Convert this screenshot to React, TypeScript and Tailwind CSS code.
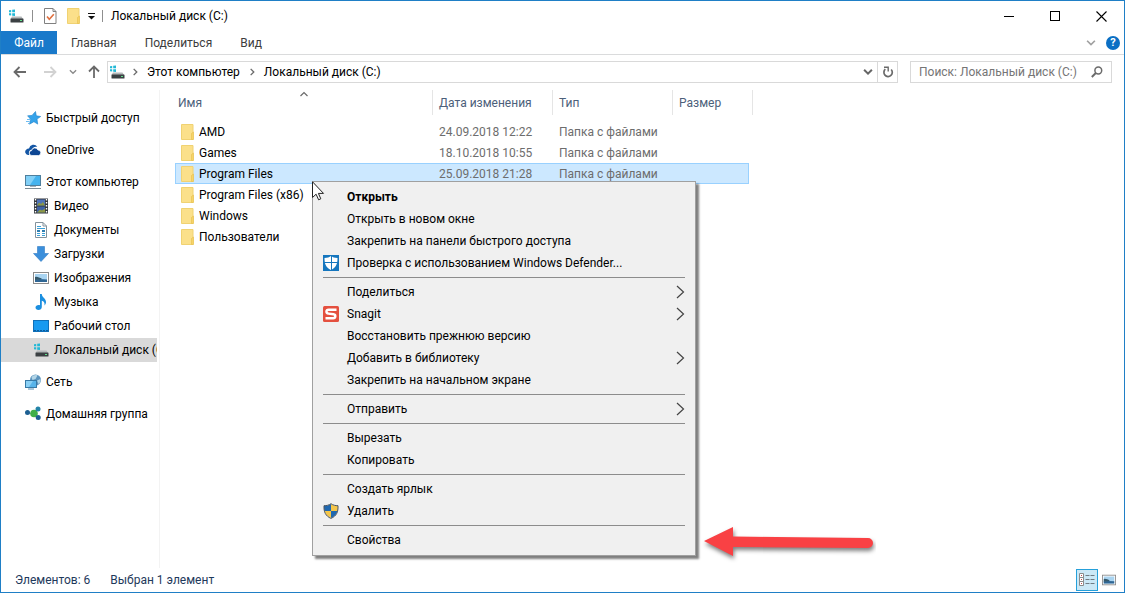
import { useState } from "react";
import type { ReactNode } from "react";
import clsx from "clsx";

/* ---------- Icons ---------- */

function DriveIcon() {
  return (
    <svg width="16" height="16" viewBox="0 0 16 16" aria-hidden="true">
      <path d="M1 2.2 3.200 2v2.300H1zM4.200 1.800l2.800-.3v2.800H4.200zM1 5.200h2.200v2.300L1 7.300zM4.200 5.200H7V8l-2.800-.3z" fill="#22b8d6" />
      <path d="M4 8.500h9.500l1.500 2.500H2.500z" fill="#b4b8ba" />
      <rect x="2.500" y="10.500" width="13" height="4" rx="0.600" fill="#3b4043" />
      <rect x="12" y="12" width="2" height="1" fill="#5fe08a" />
    </svg>
  );
}

function FolderIcon() {
  return (
    <svg width="13" height="16" viewBox="0 0 13 16" className="shrink-0" aria-hidden="true">
      <path d="M.5.5h11.500v15H.5z" fill="#fbe08a" stroke="#f0d272" />
      <path d="M10.500 9.500 12.500 8v7.500h-2z" fill="#f7d468" stroke="#e5bf4e" strokeWidth="0.600" />
    </svg>
  );
}

function CheckDocIcon() {
  return (
    <svg width="13" height="16" viewBox="0 0 13 16" aria-hidden="true">
      <path d="M.5.5h8.500l3 3v12H.5z" fill="#fff" stroke="#808080" />
      <path d="M9 .5v3h3" fill="none" stroke="#808080" />
      <path d="m3 8.500 2.300 2.700 4.500-5" fill="none" stroke="#e0703f" strokeWidth="1.600" />
    </svg>
  );
}

function StarIcon() {
  return (
    <svg width="16" height="16" viewBox="0 0 16 16" aria-hidden="true">
      <path d="m10.500 1.500.8 4.300 4.400.7-3.700 2.600.7 5-3.800-2.400-4.400 2.500 1.100-4.900-3-3.500 4.400-.4z" fill="#35a3ea" stroke="#1b7fca" strokeWidth="0.600" />
      <path d="M2 9.500h3M1 11.500h3.500M3 13.500h1.500" stroke="#5fb5ef" strokeWidth="0.900" />
    </svg>
  );
}

function CloudIcon() {
  return (
    <svg width="16" height="16" viewBox="0 0 16 16" aria-hidden="true">
      <path d="M4.300 13H3A3 3 0 0 1 1.400 7.600 3 3 0 0 1 4 6.400a4.600 4.600 0 0 1 8.300-1.600c-2.600-.7-4.900.8-5.600 3-2.500.2-3.400 2.800-2.400 5.200z" fill="#1557a5" />
      <path d="M6.900 13.500a2.400 2.400 0 0 1-.3-4.900 3.300 3.300 0 0 1 6.300-.6 2.800 2.800 0 0 1 .8 5.500z" fill="#0d4794" stroke="#fff" strokeWidth="0.700" />
    </svg>
  );
}

function ComputerIcon() {
  return (
    <svg width="16" height="16" viewBox="0 0 16 16" aria-hidden="true">
      <rect x="0.500" y="1.500" width="15" height="10" fill="#45b3ee" stroke="#4f7f9d" />
      <path d="M1 2h10L5 11H1z" fill="#82d0f7" />
      <path d="M5 12h6v1H5z" fill="#a7b4bb" />
      <path d="M0 14.500h16" stroke="#7a8b95" />
    </svg>
  );
}

function VideoIcon() {
  return (
    <svg width="16" height="16" viewBox="0 0 16 16" aria-hidden="true">
      <rect x="1" y="0.500" width="14" height="15" fill="#33373c" />
      <path d="M2.500 1v15M13.500 1v15" stroke="#fff" strokeWidth="1.400" strokeDasharray="1.400 1.600" />
      <rect x="4" y="1.500" width="8" height="6" fill="#4f73b8" />
      <rect x="4" y="8.500" width="8" height="6" fill="#3f62a6" />
      <path d="m4 7.500 2-3 2 1.500 2-2 2 3.500zM4 14.500l3-3 2 1 3-2v4z" fill="#8c9845" />
    </svg>
  );
}

function DocumentIcon() {
  return (
    <svg width="16" height="16" viewBox="0 0 16 16" aria-hidden="true">
      <path d="M2.500.5h7.500l3.500 3.500v11.500h-11z" fill="#fff" stroke="#83929c" />
      <path d="M10 .5V4h3.500" fill="none" stroke="#83929c" />
      <path d="M4 4.500h4M4 6.500h8M4 11.500h3M9 11.500h3M4 13.500h3M9 13.500h3" stroke="#3a9fd6" />
      <path d="M4 9h3M9 9h3" stroke="#2f7eb0" strokeWidth="2" />
    </svg>
  );
}

function DownloadIcon() {
  return (
    <svg width="16" height="16" viewBox="0 0 16 16" aria-hidden="true">
      <path d="M4.500.5h7v7h4L8 15.500.5 7.500h4z" fill="#3b8fdb" stroke="#2f7ac2" strokeWidth="0.600" />
    </svg>
  );
}

function PictureIcon({ size = 16 }: { size?: number }) {
  return (
    <svg width={size} height={size} viewBox="0 0 16 16" aria-hidden="true">
      <rect x="0.500" y="2.500" width="15" height="11" fill="#fff" stroke="#8b8b8b" />
      <rect x="2" y="4" width="12" height="8" fill="#a9d4f1" />
      <path d="M2 9.500 7 9l7 .5V12H2z" fill="#2f6694" />
      <path d="M2 7c2-1 4 .5 7 1.500l-2 1-5 .5z" fill="#35586a" />
    </svg>
  );
}

function MusicIcon() {
  return (
    <svg width="16" height="16" viewBox="0 0 16 16" aria-hidden="true">
      <path d="M7 0h1.800c0 3.500 4.600 4.500 4.200 8.500-.2 1.500-.9 2.300-1.500 3 .5-2.700-.7-4.200-2.700-4.800V13c0 1.700-1.500 3-3.300 3S2.500 15 2.500 13.500 4 11 5.500 11c.6 0 1.100.1 1.500.3z" fill="#1b8fe0" />
    </svg>
  );
}

function DesktopIcon() {
  return (
    <svg width="16" height="16" viewBox="0 0 16 16" aria-hidden="true">
      <rect x="0.500" y="2.500" width="15" height="11" fill="#189af0" stroke="#0f6fb8" />
      <path d="M1 12.500h14" stroke="#0d5c9c" strokeDasharray="2 1" />
    </svg>
  );
}

function NetworkIcon() {
  return (
    <svg width="16" height="16" viewBox="0 0 16 16" aria-hidden="true">
      <circle cx="10.500" cy="6" r="5.500" fill="#5b93bd" />
      <path d="M6.500 3.500c1.500-2.500 4-3 6-2l-2 3.500-3 1zM12 6.500l3.500-1.500c.5 2-.5 4-2 5z" fill="#b3d5e6" />
      <rect x="0.500" y="6.500" width="11" height="7" fill="#58b4ea" stroke="#3779a5" />
      <path d="M1 7h7l-4 6H1z" fill="#8ad0f5" />
      <path d="M3 15h6" stroke="#5a8fb2" />
    </svg>
  );
}

function HomeGroupIcon() {
  return (
    <svg width="16" height="16" viewBox="0 0 16 16" aria-hidden="true">
      <path d="m3 7 6 1 4-5M9 8l4 4" stroke="#8fa9b3" fill="none" />
      <circle cx="2.500" cy="6.500" r="2.500" fill="#1d5f92" />
      <circle cx="9" cy="7.500" r="3.800" fill="#3fae49" />
      <circle cx="13" cy="3" r="2.500" fill="#2383a8" />
      <circle cx="13.200" cy="11.500" r="2.500" fill="#1d5f92" />
    </svg>
  );
}

function DefenderIcon() {
  return (
    <svg width="16" height="16" viewBox="0 0 16 16" aria-hidden="true">
      <path d="M0 0h16v16H0z" fill="#1576be" />
      <path d="M8 1c1.500 1.300 3.700 2 6.500 2 0 5.500-1 9.300-6.500 12C2.500 12.300 1.500 8.500 1.500 3c2.800 0 5-.7 6.500-2z" fill="#fff" />
      <path d="M8.500 1v14M1 7.500h14" stroke="#1576be" />
    </svg>
  );
}

function SnagitIcon() {
  return (
    <svg width="16" height="16" viewBox="0 0 16 16" aria-hidden="true">
      <rect width="16" height="16" rx="1.500" fill="#e4503f" />
      <path d="M13.500 3.700H5.700c-3 0-3 3.600-.2 3.900l5 .7c2.600.4 2.400 4-.4 4H2.500" fill="none" stroke="#fff" strokeWidth="2.400" />
    </svg>
  );
}

function ShieldIcon() {
  return (
    <svg width="16" height="16" viewBox="0 0 16 16" aria-hidden="true">
      <path d="M8 1v7H1.500C1 6 1 4 1 2.800 4 2.800 6 2.300 8 1z" fill="#2068b0" />
      <path d="M8 1v7h6.500c.5-2 .5-4 .5-5.200-3 0-5-.5-7-1.800z" fill="#f5c64a" />
      <path d="M8 15V8H1.500C2.500 11.500 4.500 13.500 8 15z" fill="#f5c64a" />
      <path d="M8 15V8h6.500c-1 3.500-3 5.500-6.500 7z" fill="#2068b0" />
      <path d="M8 .7c2 1.500 4.500 2 7 2C15.300 9 13.500 13 8 15.400 2.500 13 .7 9 1 2.700c2.500 0 5-.5 7-2z" fill="none" stroke="#4a5560" />
    </svg>
  );
}

function Chevron({ dir, color = "#6b6b6b", size = 8, weight = 1.5 }: { dir: "down" | "right" | "up"; color?: string; size?: number; weight?: number }) {
  const d = {
    down: "M1 2.500 4.500 6 8 2.500",
    right: "M3 1l3.500 3.500L3 8",
    up: "M1 6 4.500 2.500 8 6",
  }[dir];
  return (
    <svg width={size} height={size} viewBox="0 0 9 9" className="shrink-0" aria-hidden="true">
      <path d={d} fill="none" stroke={color} strokeWidth={weight} />
    </svg>
  );
}

function ArrowIcon({ dir, color }: { dir: "left" | "right" | "up"; color: string }) {
  const d = {
    left: "M13 7H2M6.500 2 1.500 7l5 5",
    right: "M1 7h11M7.500 2l5 5-5 5",
    up: "M7 13V2M2 6.500l5-5 5 5",
  }[dir];
  return (
    <svg width="14" height="14" viewBox="0 0 14 14" aria-hidden="true">
      <path d={d} fill="none" stroke={color} strokeWidth="1.800" />
    </svg>
  );
}

/* ---------- Data ---------- */

type NavItem = { label: string; icon: ReactNode; child?: boolean; selected?: boolean };

const navItems: NavItem[] = [
  { label: "Быстрый доступ", icon: <StarIcon /> },
  { label: "OneDrive", icon: <CloudIcon /> },
  { label: "Этот компьютер", icon: <ComputerIcon /> },
  { label: "Видео", icon: <VideoIcon />, child: true },
  { label: "Документы", icon: <DocumentIcon />, child: true },
  { label: "Загрузки", icon: <DownloadIcon />, child: true },
  { label: "Изображения", icon: <PictureIcon />, child: true },
  { label: "Музыка", icon: <MusicIcon />, child: true },
  { label: "Рабочий стол", icon: <DesktopIcon />, child: true },
  { label: "Локальный диск (C:)", icon: <DriveIcon />, child: true, selected: true },
  { label: "Сеть", icon: <NetworkIcon /> },
  { label: "Домашняя группа", icon: <HomeGroupIcon /> },
];

const files = [
  { name: "AMD", date: "24.09.2018 12:22", type: "Папка с файлами" },
  { name: "Games", date: "18.10.2018 10:55", type: "Папка с файлами" },
  { name: "Program Files", date: "25.09.2018 21:28", type: "Папка с файлами" },
  { name: "Program Files (x86)", date: "", type: "" },
  { name: "Windows", date: "", type: "" },
  { name: "Пользователи", date: "", type: "" },
];

type MenuItem = { label: string; icon?: ReactNode; bold?: boolean; submenu?: boolean };

const menuGroups: MenuItem[][] = [
  [
    { label: "Открыть", bold: true },
    { label: "Открыть в новом окне" },
    { label: "Закрепить на панели быстрого доступа" },
    { label: "Проверка с использованием Windows Defender...", icon: <DefenderIcon /> },
  ],
  [
    { label: "Поделиться", submenu: true },
    { label: "Snagit", icon: <SnagitIcon />, submenu: true },
    { label: "Восстановить прежнюю версию" },
    { label: "Добавить в библиотеку", submenu: true },
    { label: "Закрепить на начальном экране" },
  ],
  [{ label: "Отправить", submenu: true }],
  [{ label: "Вырезать" }, { label: "Копировать" }],
  [{ label: "Создать ярлык" }, { label: "Удалить", icon: <ShieldIcon /> }],
  [{ label: "Свойства" }],
];

/* ---------- Parts ---------- */

function TitleBar() {
  return (
    <header className="flex h-[30px] items-center pl-[7px]">
      <DriveIcon />
      <span className="ml-2 h-3 w-px bg-[#8f8f8f]" />
      <button aria-label="Свойства" className="ml-[11px]"><CheckDocIcon /></button>
      <button aria-label="Новая папка" className="ml-2.5"><FolderIcon /></button>
      <button aria-label="Настройка панели" className="ml-[7px]">
        <svg width="9" height="8" viewBox="0 0 9 8" aria-hidden="true">
          <path d="M1 1.500h7" stroke="#111" />
          <path d="M1 4h7L4.500 7.500z" fill="#111" />
        </svg>
      </button>
      <span className="ml-1.5 h-3 w-px bg-[#8f8f8f]" />
      <h1 className="ml-2 flex-1">Локальный диск (C:)</h1>
      <button aria-label="Свернуть" className="flex h-full w-[46px] items-center justify-center">
        <span className="h-px w-2.5 bg-black" />
      </button>
      <button aria-label="Развернуть" className="flex h-full w-[46px] items-center justify-center">
        <span className="size-2.5 border border-black" />
      </button>
      <button aria-label="Закрыть" className="flex h-full w-[46px] items-center justify-center">
        <svg width="11" height="11" viewBox="0 0 11 11" aria-hidden="true">
          <path d="m.5.5 10 10M10.500.5l-10 10" stroke="#000" strokeWidth="1.100" />
        </svg>
      </button>
    </header>
  );
}

function RibbonTabs() {
  return (
    <nav className="flex h-6 items-stretch border-b border-[#dadbdc] text-[#3c3c3c]">
      <button className="w-14 bg-[#1979ca] text-white">Файл</button>
      <button className="px-3.5">Главная</button>
      <button className="px-3.5">Поделиться</button>
      <button className="px-3.5">Вид</button>
      <div className="flex flex-1 items-center justify-end gap-2.5 pr-1">
        <button aria-label="Развернуть ленту"><Chevron dir="down" color="#a0a0a0" size={10} /></button>
        <button aria-label="Справка" className="flex size-3.5 items-center justify-center rounded-full bg-[#0b6fc4] text-[11px] font-bold text-white">
          ?
        </button>
      </div>
    </nav>
  );
}

function AddressBar() {
  return (
    <div className="flex items-center px-3 pt-1.5 pb-[7px]">
      <button aria-label="Назад"><ArrowIcon dir="left" color="#6a6a6a" /></button>
      <button aria-label="Вперёд" className="ml-4"><ArrowIcon dir="right" color="#d2d2d2" /></button>
      <button aria-label="Последние" className="ml-3"><Chevron dir="down" color="#8a8a8a" /></button>
      <button aria-label="Вверх" className="ml-2.5"><ArrowIcon dir="up" color="#6a6a6a" /></button>
      <div className="ml-1.5 flex h-[22px] flex-1 items-center border border-[#d9d9d9] pl-px">
        <DriveIcon />
        <span className="ml-1.5 flex"><Chevron dir="right" /></span>
        <button className="ml-2">Этот компьютер</button>
        <span className="ml-2 flex"><Chevron dir="right" /></span>
        <button className="ml-2">Локальный диск (C:)</button>
        <span className="flex-1" />
        <button aria-label="Предыдущие расположения" className="px-1"><Chevron dir="down" color="#666" size={10} weight={1.8} /></button>
        <button aria-label="Обновить" className="flex h-full w-5 items-center justify-center border-l border-[#d9d9d9]">
          <svg width="12" height="12" viewBox="0 0 12 12" aria-hidden="true">
            <path d="M9.200 3.500A4.200 4.200 0 1 1 3.300 3.200" fill="none" stroke="#6a6a6a" strokeWidth="1.700" />
            <path d="M2 1.200h4.200v4.300" fill="none" stroke="#6a6a6a" strokeWidth="1.400" />
          </svg>
        </button>
      </div>
      <div className="ml-3 flex h-[22px] w-[202px] items-center border border-[#d9d9d9] px-2">
        <input
          type="search"
          aria-label="Поиск"
          placeholder="Поиск: Локальный диск (C:)"
          className="min-w-0 flex-1 outline-none placeholder:text-[#757575]"
        />
        <svg width="12" height="12" viewBox="0 0 12 12" aria-hidden="true">
          <circle cx="7.300" cy="4.500" r="3.400" fill="none" stroke="#6a6a6a" strokeWidth="1.500" />
          <path d="M4.800 7 .8 11" stroke="#6a6a6a" strokeWidth="1.900" />
        </svg>
      </div>
    </div>
  );
}

function Sidebar() {
  return (
    <aside className="w-[159px] shrink-0 border-r border-[#f3f3f3] pt-4 pr-0.5">
      <ul>
        {navItems.map((item, i) => (
          <li key={item.label} className={clsx(!item.child && i > 0 && "mt-2")}>
            <a
              href="#"
              className={clsx(
                "flex h-6 items-center gap-[5px] overflow-hidden whitespace-nowrap",
                item.child ? "pl-8" : "pl-6",
                item.selected && "bg-[#d9d9d9]"
              )}
            >
              <span className="shrink-0">{item.icon}</span>
              {item.label}
            </a>
          </li>
        ))}
      </ul>
    </aside>
  );
}

function FileTable({ selected, onSelect }: { selected: string; onSelect: (name: string) => void }) {
  return (
    <table className="w-[574px] table-fixed border-collapse text-left">
      <colgroup>
        <col className="w-[258px]" />
        <col className="w-[120px]" />
        <col className="w-[120px]" />
        <col className="w-[76px]" />
      </colgroup>
      <thead className="text-[#4c607a]">
        <tr>
          {["Имя", "Дата изменения", "Тип", "Размер"].map((title, i) => (
            <th key={title} className="relative p-0 pb-1.5 font-normal">
              <div
                className={clsx(
                  "flex h-[25px] items-center border-r border-[#e5e5e5]",
                  i === 0 ? "pl-[3px]" : "pl-1.5",
                  i === 3 && "-mr-1"
                )}
              >
                {title}
              </div>
              {i === 0 && (
                <span className="absolute top-0 left-1/2 -translate-x-1/2">
                  <Chevron dir="up" size={9} weight={1.2} />
                </span>
              )}
            </th>
          ))}
        </tr>
      </thead>
      <tbody className="text-[#6d6d6d]">
        {files.map((file) => (
          <tr
            key={file.name}
            onClick={() => onSelect(file.name)}
            className={clsx("h-[21px]", file.name === selected && "bg-[#cce8ff] outline outline-[#99d1ff] -outline-offset-1")}
          >
            <td className="p-0 pl-1.5 text-black">
              <span className="flex items-center gap-[5px]">
                <FolderIcon />
                {file.name}
              </span>
            </td>
            <td className="p-0 pl-1.5">{file.date}</td>
            <td className="p-0 pl-1.5">{file.type}</td>
            <td className="p-0" />
          </tr>
        ))}
      </tbody>
    </table>
  );
}

function ContextMenu() {
  return (
    <div
      role="menu"
      className="absolute top-[91px] left-[152px] w-96 border border-[#a0a0a0] bg-[#f0f0f0] px-2.5 py-1 shadow-[3px_3px_2px_rgba(0,0,0,0.5)]"
    >
      {menuGroups.map((group, g) => (
        <div key={g}>
          {g > 0 && <div role="separator" className="my-[3px] h-px bg-[#8c8c8c]" />}
          {group.map((item) => (
            <button
              key={item.label}
              role="menuitem"
              className={clsx("flex h-[22px] w-full items-center gap-2 text-left", item.bold && "font-bold")}
            >
              <span className="size-4 shrink-0">{item.icon}</span>
              <span className="flex-1 whitespace-nowrap">{item.label}</span>
              {item.submenu && (
                <svg width="9" height="14" viewBox="0 0 9 14" aria-hidden="true">
                  <path d="m1 1 6.500 6L1 13" fill="none" stroke="#444" strokeWidth="1.200" />
                </svg>
              )}
            </button>
          ))}
        </div>
      ))}
    </div>
  );
}

function MouseCursor() {
  return (
    <svg width="13" height="20" viewBox="0 0 13 20" className="absolute top-[91px] left-[152px]" aria-hidden="true">
      <path d="M.5.8v15.700l3.600-3.300 2.500 5.600 2.200-1-2.400-5.400h5.100z" fill="#fff" stroke="#222" />
    </svg>
  );
}

function PointerArrow() {
  return (
    <svg width="176" height="40" viewBox="0 0 176 40" className="absolute top-[433px] left-[540px]" aria-hidden="true">
      <path
        d="M4 18 33 4v9.500l135 1.500a5 5 0 0 1 0 10L33 24v9z"
        fill="#f94144"
        className="drop-shadow-[1px_3px_2px_rgba(0,0,0,0.5)]"
      />
    </svg>
  );
}

function StatusBar() {
  return (
    <footer className="flex h-6 items-center pr-2 pl-3.5 text-[#1e395b]">
      <span>Элементов: 6</span>
      <span className="ml-5 flex-1">Выбран 1 элемент</span>
      <button aria-label="Таблица" className="flex size-[22px] items-center justify-center border border-[#26a0da] bg-[#cbe8f6]">
        <svg width="16" height="14" viewBox="0 0 16 14" aria-hidden="true">
          <path d="M.5.5h4v4h-4zM.5 4.500h4v4h-4zM.5 8.500h4v4h-4z" fill="#fff" stroke="#8a8a8a" />
          <path d="M2 2.500h1M2 6.500h1M2 10.500h1" stroke="#c0504d" />
          <path d="M6.500 2.500h4M11.500 2.500h4M6.500 6.500h4M11.500 6.500h4M6.500 10.500h4M11.500 10.500h4" stroke="#6f7b83" />
        </svg>
      </button>
      <button aria-label="Крупные значки" className="ml-1"><PictureIcon size={14} /></button>
    </footer>
  );
}

export default function App() {
  const [selected, setSelected] = useState("Program Files");

  return (
    <div className="flex min-h-screen flex-col border border-[#1f7fc6] bg-white font-['Roboto','Open_Sans',sans-serif] text-[12px] leading-4 text-black">
      <TitleBar />
      <RibbonTabs />
      <AddressBar />
      <div className="flex flex-1">
        <Sidebar />
        <main className="relative flex-1 pl-[15px]">
          <FileTable selected={selected} onSelect={setSelected} />
          <ContextMenu />
          <MouseCursor />
          <PointerArrow />
        </main>
      </div>
      <StatusBar />
    </div>
  );
}
